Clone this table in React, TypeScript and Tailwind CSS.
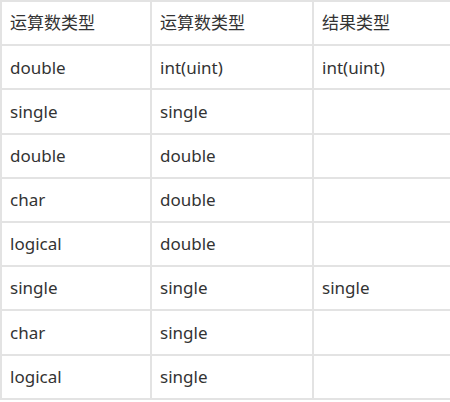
const rows: string[][] = [
  ["运算数类型", "运算数类型", "结果类型"],
  ["double", "int(uint)", "int(uint)"],
  ["single", "single", ""],
  ["double", "double", ""],
  ["char", "double", ""],
  ["logical", "double", ""],
  ["single", "single", "single"],
  ["char", "single", ""],
  ["logical", "single", ""],
]

export default function App() {
  return (
    <div className="w-[450px] h-[402px] overflow-hidden bg-white">
      <div
        className="w-[470px] border-l-2 border-t-2 border-[#e3e3e3] text-[17px] text-[#333]"
        style={{ fontFamily: '"Noto Sans", "Noto Sans CJK SC", sans-serif' }}
      >
        {rows.map((row, i) => (
          <div key={i} className="grid grid-cols-[150px_162px_1fr] h-[44.2px]">
            {row.map((cell, j) => (
              <div
                key={j}
                className="flex items-center px-[8px] border-r-2 border-b-2 border-[#e3e3e3] whitespace-nowrap"
              >
                {cell}
              </div>
            ))}
          </div>
        ))}
      </div>
    </div>
  )
}
